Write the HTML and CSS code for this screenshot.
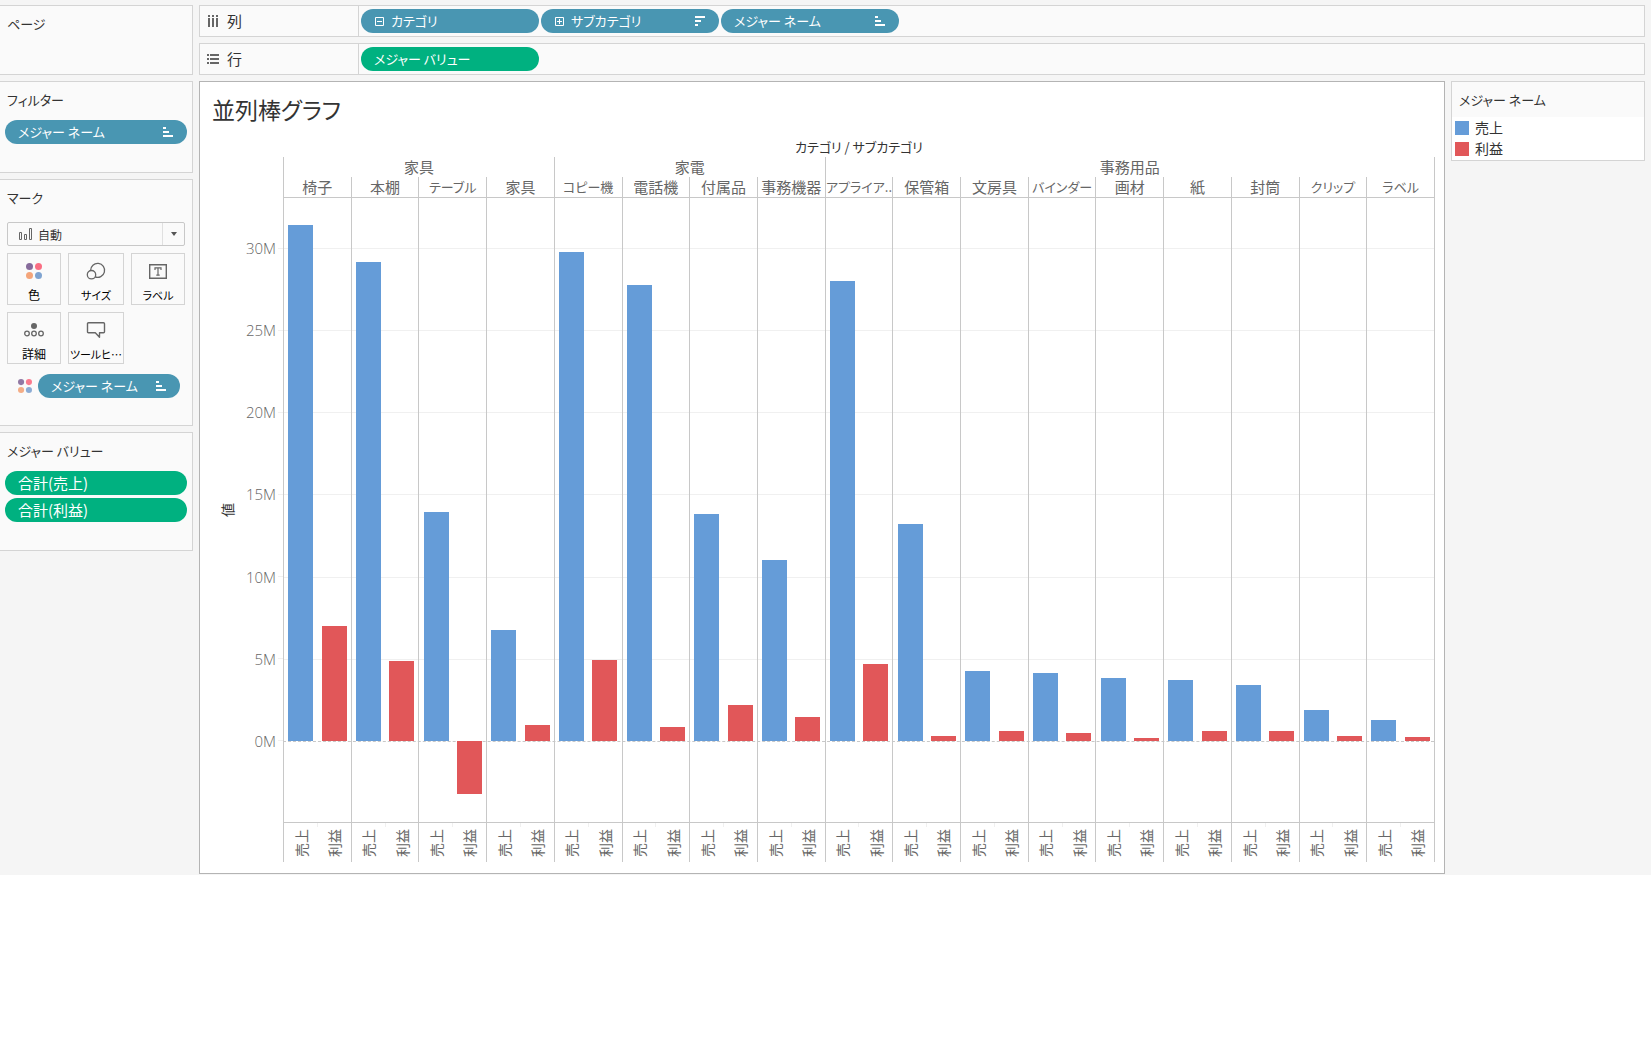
FILE: index.html
```html
<!DOCTYPE html>
<html lang="ja">
<head>
<meta charset="utf-8">
<meta name="viewport" content="width=device-width, initial-scale=1">
<title>並列棒グラフ</title>
<link rel="stylesheet" href="styles.css">
</head>
<body>
<svg class="defs" aria-hidden="true">
  <symbol id="sort-asc" viewBox="0 0 10 10"><path d="M0 0h3v2H0zM0 4h6v2H0zM0 8h10v2H0z"/></symbol>
  <symbol id="sort-desc" viewBox="0 0 10 10"><path d="M0 0h10v2H0zM0 4h6v2H0zM0 8h3v2H0z"/></symbol>
  <symbol id="dots" viewBox="0 0 16 16"><circle cx="3.5" cy="3.5" r="3.5" fill="#866b9b"/><circle cx="12.5" cy="3.5" r="3.5" fill="#fa6e83"/><circle cx="3.5" cy="12.5" r="3.5" fill="#f4a57a"/><circle cx="12.5" cy="12.5" r="3.5" fill="#7fa3d0"/></symbol>
</svg>
<div class="workspace">
  <aside class="cards">
    <section class="card card-pages">
      <h2 class="card-title">ページ</h2>
    </section>
    <section class="card">
      <h2 class="card-title">フィルター</h2>
      <div class="pills">
        <button class="pill blue" type="button">メジャー ネーム<svg class="sort"><use href="#sort-asc"/></svg></button>
      </div>
    </section>
    <section class="card card-marks">
      <h2 class="card-title">マーク</h2>
      <div class="marks">
        <div class="mark-type">
          <svg class="mark-icon" viewBox="0 0 14 12"><path d="M.5 4.500h2v7h-2zM5.500 6.500h2v5h-2zM10.500.5h2v11h-2z" fill="none" stroke="#666"/></svg>
          <select class="mark-select" aria-label="マークの種類"><option>自動</option></select>
          <span class="arrow"><svg width="6" height="4" viewBox="0 0 6 4"><path d="M0 0h6L3 4z" fill="#555"/></svg></span>
        </div>
        <div class="mark-buttons">
          <button class="mark-button" type="button"><svg class="tile-icon dots-icon"><use href="#dots"/></svg>色</button>
          <button class="mark-button kana" type="button"><svg class="tile-icon" viewBox="0 0 20 18"><g fill="none" stroke="#666" stroke-width="1.300"><path d="M4.600 8.500A7 7 0 1 1 9 14.900"/><circle cx="5.500" cy="12.700" r="4.200"/></g></svg>サイズ</button>
          <button class="mark-button kana" type="button"><svg class="tile-icon" viewBox="0 0 20 18"><path d="M1.700 2.700h16.600v13.600H1.700z" fill="none" stroke="#666" stroke-width="1.400"/><path d="M7 8V5.800h6V8M10 5.800v7.400M8.300 13.200h3.400" fill="none" stroke="#666" stroke-width="1.200"/></svg>ラベル</button>
          <button class="mark-button" type="button"><svg class="tile-icon" viewBox="0 0 20 18"><circle cx="10" cy="5" r="3" fill="#666"/><g fill="none" stroke="#666" stroke-width="1.300"><circle cx="3" cy="12.500" r="2.300"/><circle cx="10" cy="12.500" r="2.300"/><circle cx="17" cy="12.500" r="2.300"/></g></svg>詳細</button>
          <button class="mark-button kana" type="button"><svg class="tile-icon" viewBox="0 0 20 18"><path d="M2.500 1.700h15q1 0 1 1v8q0 1-1 1h-4v4.500l-4.200-4.500H2.500q-1 0-1-1v-8q0-1 1-1z" fill="none" stroke="#666" stroke-width="1.400" stroke-linejoin="round"/></svg>ツールヒ…</button>
        </div>
        <div class="encoding">
          <svg class="encoding-icon"><use href="#dots"/></svg>
          <button class="pill blue" type="button">メジャー ネーム<svg class="sort"><use href="#sort-asc"/></svg></button>
        </div>
      </div>
    </section>
    <section class="card">
      <h2 class="card-title">メジャー バリュー</h2>
      <div class="pills">
        <button class="pill green kanji" type="button">合計(売上)</button>
        <button class="pill green kanji" type="button">合計(利益)</button>
      </div>
    </section>
  </aside>

  <div class="main">
    <div class="shelf">
      <div class="shelf-name"><svg class="shelf-icon" viewBox="0 0 12 12"><path d="M1 0h2v2H1zM5 0h2v2H5zM9 0h2v2H9zM1 3h2v9H1zM5 3h2v9H5zM9 3h2v9H9z"/></svg>列</div>
      <div class="shelf-pills">
        <button class="pill blue" type="button"><svg class="toggle" viewBox="0 0 9 9"><path d="M.5.5h8v8h-8zM2 4.500h5"/></svg>カテゴリ</button>
        <button class="pill blue" type="button"><svg class="toggle" viewBox="0 0 9 9"><path d="M.5.5h8v8h-8zM2 4.500h5M4.500 2v5"/></svg>サブカテゴリ<svg class="sort"><use href="#sort-desc"/></svg></button>
        <button class="pill blue" type="button">メジャー ネーム<svg class="sort"><use href="#sort-asc"/></svg></button>
      </div>
    </div>
    <div class="shelf">
      <div class="shelf-name"><svg class="shelf-icon" viewBox="0 0 12 12"><path d="M0 1h2v2H0zM0 5h2v2H0zM0 9h2v2H0zM3 1h9v2H3zM3 5h9v2H3zM3 9h9v2H3z"/></svg>行</div>
      <div class="shelf-pills">
        <button class="pill green" type="button">メジャー バリュー</button>
      </div>
    </div>

    <div class="stage">
      <main class="view">
        <h1 class="view-title">並列棒グラフ</h1>
        <div class="chart">
          <div class="caption">カテゴリ / サブカテゴリ</div>
          <div class="axis">
            <div class="axis-title"><span class="sideways">値</span></div>
            <div class="axis-labels">
              <span>30M</span><span>25M</span><span>20M</span><span>15M</span><span>10M</span><span>5M</span><span>0M</span>
            </div>
          </div>
          <div class="panes">
            <div class="group four">家具</div>
            <div class="group four">家電</div>
            <div class="group nine">事務用品</div>
            <div class="name kanji">椅子</div><div class="name kanji">本棚</div><div class="name">テーブル</div><div class="name kanji">家具</div><div class="name">コピー機</div><div class="name kanji">電話機</div><div class="name kanji">付属品</div><div class="name kanji">事務機器</div><div class="name">アプライア..</div><div class="name kanji">保管箱</div><div class="name kanji">文房具</div><div class="name">バインダー</div><div class="name kanji">画材</div><div class="name kanji">紙</div><div class="name kanji">封筒</div><div class="name">クリップ</div><div class="name">ラベル</div>
            <div class="gridlines"><i></i><i></i><i></i><i></i><i></i><i></i><i></i><i class="zero"></i></div>
            <div class="plots">
              <div class="pane"><i class="bar sales" style="--v:31.4"></i><i class="bar profit" style="--v:7"></i></div>
              <div class="pane"><i class="bar sales" style="--v:29.15"></i><i class="bar profit" style="--v:4.87"></i></div>
              <div class="pane"><i class="bar sales" style="--v:13.94"></i><i class="bar profit loss" style="--v:3.23"></i></div>
              <div class="pane"><i class="bar sales" style="--v:6.75"></i><i class="bar profit" style="--v:0.97"></i></div>
              <div class="pane"><i class="bar sales" style="--v:29.76"></i><i class="bar profit" style="--v:4.93"></i></div>
              <div class="pane"><i class="bar sales" style="--v:27.75"></i><i class="bar profit" style="--v:0.85"></i></div>
              <div class="pane"><i class="bar sales" style="--v:13.81"></i><i class="bar profit" style="--v:2.19"></i></div>
              <div class="pane"><i class="bar sales" style="--v:11.01"></i><i class="bar profit" style="--v:1.46"></i></div>
              <div class="pane"><i class="bar sales" style="--v:27.99"></i><i class="bar profit" style="--v:4.69"></i></div>
              <div class="pane"><i class="bar sales" style="--v:13.2"></i><i class="bar profit" style="--v:0.3"></i></div>
              <div class="pane"><i class="bar sales" style="--v:4.26"></i><i class="bar profit" style="--v:0.61"></i></div>
              <div class="pane"><i class="bar sales" style="--v:4.14"></i><i class="bar profit" style="--v:0.49"></i></div>
              <div class="pane"><i class="bar sales" style="--v:3.83"></i><i class="bar profit" style="--v:0.18"></i></div>
              <div class="pane"><i class="bar sales" style="--v:3.71"></i><i class="bar profit" style="--v:0.61"></i></div>
              <div class="pane"><i class="bar sales" style="--v:3.41"></i><i class="bar profit" style="--v:0.61"></i></div>
              <div class="pane"><i class="bar sales" style="--v:1.89"></i><i class="bar profit" style="--v:0.3"></i></div>
              <div class="pane"><i class="bar sales" style="--v:1.28"></i><i class="bar profit" style="--v:0.24"></i></div>
            </div>
            <div class="foot"><span class="sideways">売上</span><span class="sideways">利益</span></div>
            <div class="foot"><span class="sideways">売上</span><span class="sideways">利益</span></div>
            <div class="foot"><span class="sideways">売上</span><span class="sideways">利益</span></div>
            <div class="foot"><span class="sideways">売上</span><span class="sideways">利益</span></div>
            <div class="foot"><span class="sideways">売上</span><span class="sideways">利益</span></div>
            <div class="foot"><span class="sideways">売上</span><span class="sideways">利益</span></div>
            <div class="foot"><span class="sideways">売上</span><span class="sideways">利益</span></div>
            <div class="foot"><span class="sideways">売上</span><span class="sideways">利益</span></div>
            <div class="foot"><span class="sideways">売上</span><span class="sideways">利益</span></div>
            <div class="foot"><span class="sideways">売上</span><span class="sideways">利益</span></div>
            <div class="foot"><span class="sideways">売上</span><span class="sideways">利益</span></div>
            <div class="foot"><span class="sideways">売上</span><span class="sideways">利益</span></div>
            <div class="foot"><span class="sideways">売上</span><span class="sideways">利益</span></div>
            <div class="foot"><span class="sideways">売上</span><span class="sideways">利益</span></div>
            <div class="foot"><span class="sideways">売上</span><span class="sideways">利益</span></div>
            <div class="foot"><span class="sideways">売上</span><span class="sideways">利益</span></div>
            <div class="foot"><span class="sideways">売上</span><span class="sideways">利益</span></div>
          </div>
        </div>
      </main>
      <aside class="legend">
        <h2 class="legend-title">メジャー ネーム</h2>
        <ul class="legend-items">
          <li><i class="swatch sales"></i>売上</li>
          <li><i class="swatch profit"></i>利益</li>
        </ul>
      </aside>
    </div>
  </div>
</div>
</body>
</html>
```
FILE: styles.css
```css
* {
  box-sizing: border-box;
}

body {
  margin: 0;
  background: #fff;
  color: #333;
  font: 13px/20px "Noto Sans CJK JP", sans-serif;
  font-feature-settings: "palt";
}

button,
select {
  font: inherit;
  font-feature-settings: inherit;
}

h1,
h2,
ul {
  margin: 0;
  padding: 0;
  font-weight: 400;
  list-style: none;
}

.defs {
  display: none;
}

.workspace {
  display: grid;
  grid-template-columns: 193px minmax(0, 1fr);
  gap: 6px;
  padding: 5px 6px 1px 0;
  background: #f5f5f5;
}

/* Cards down the left side */

.cards {
  display: flex;
  flex-direction: column;
  gap: 6px;
}

.card {
  padding: 6px 5px 28px;
  border: 1px solid #d4d4d4;
  border-left: 0;
  background: #fafafa;
}

.card-pages {
  min-height: 70px;
}

.card-marks {
  padding-bottom: 27px;
}

.card-title {
  padding-left: 2px;
  font-size: 13px;
  line-height: 24px;
}

.pills {
  display: flex;
  flex-direction: column;
  gap: 3px;
  padding-top: 8px;
}

.pill {
  display: flex;
  align-items: center;
  height: 24px;
  padding: 0 14px 0 13px;
  border: 0;
  border-radius: 12px;
  color: #fff;
  font-size: 13px;
  line-height: 24px;
  white-space: nowrap;
}

.pill.kanji {
  font-size: 15px;
}

.blue {
  background: #4996b2;
}

.green {
  background: #00b180;
}

.sort {
  width: 10px;
  height: 10px;
  margin-left: auto;
  fill: #fff;
}

.toggle {
  width: 9px;
  height: 9px;
  margin: 0 7px 0 1px;
  fill: none;
  stroke: #fff;
}

/* Marks card */

.marks {
  display: flex;
  flex-direction: column;
  gap: 7px;
  padding: 12px 2px 0;
}

.mark-type {
  display: flex;
  height: 24px;
  border: 1px solid #c8c8c8;
  border-radius: 2px;
  align-items: center;
}

.mark-icon {
  width: 14px;
  height: 12px;
  margin-left: 11px;
}

.mark-select {
  flex: 1;
  min-width: 0;
  height: 22px;
  padding: 1px 0 0 5px;
  border: 0;
  appearance: none;
  background: transparent;
  color: #333;
  font-size: 12px;
  line-height: 20px;
}

.arrow {
  display: flex;
  align-items: center;
  justify-content: center;
  width: 22px;
  height: 22px;
  border-left: 1px solid #e0e0e0;
}

.mark-buttons {
  display: grid;
  grid-template-columns: minmax(0, 54fr) minmax(0, 56fr) minmax(0, 54fr);
  gap: 7px;
}

.mark-button {
  display: flex;
  flex-direction: column;
  align-items: center;
  gap: 5px;
  height: 52px;
  padding: 8px 0 0;
  border: 1px solid #d4d4d4;
  background: #fafafa;
  color: #000;
  font-size: 12px;
  line-height: 20px;
  white-space: nowrap;
}

.mark-button.kana {
  font-size: 11px;
}

.tile-icon {
  flex: none;
  width: 20px;
  height: 18px;
}

.dots-icon {
  padding: 1px 0;
}

.encoding {
  display: flex;
  align-items: center;
  gap: 6px;
  padding: 3px 5px 0 11px;
}

.encoding .pill {
  flex: 1;
}

.encoding-icon {
  width: 14px;
  height: 14px;
  opacity: 0.9;
}

/* Column and row shelves */

.main {
  display: flex;
  flex-direction: column;
  gap: 6px;
}

.shelf {
  display: flex;
  height: 32px;
  border: 1px solid #d4d4d4;
  background: #fafafa;
}

.shelf-name {
  display: flex;
  align-items: center;
  gap: 8px;
  width: 159px;
  padding-left: 7px;
  border-right: 1px solid #d4d4d4;
  font-size: 15px;
}

.shelf-icon {
  width: 12px;
  height: 12px;
  fill: #666;
}

.shelf-pills {
  display: flex;
  align-items: center;
  gap: 2px;
  padding-left: 2px;
}

.shelf-pills .pill {
  width: 178px;
}

/* Worksheet and legend */

.stage {
  display: grid;
  grid-template-columns: minmax(0, 1fr) 194px;
  gap: 6px;
  align-items: start;
}

.view {
  padding: 10px 9px 11px 0;
  border: 1px solid #b4b4b4;
  background: #fff;
}

.view-title {
  padding-left: 12px;
  font-size: 23px;
  line-height: 34px;
}

.chart {
  display: grid;
  grid-template-columns: 83px minmax(0, 1fr);
  padding-top: 11px;
}

.caption {
  grid-column: 2;
  height: 20px;
  text-align: center;
}

.axis {
  display: grid;
  grid-template-columns: 1fr 46px;
  grid-template-rows: 624px;
  padding-top: 41px;
}

.axis-title {
  display: grid;
  place-items: center end;
  color: #333;
  font-size: 14px;
}

.sideways {
  writing-mode: vertical-rl;
  text-orientation: sideways;
  transform: rotate(180deg);
}

.axis-labels {
  display: grid;
  grid-template-rows: 9fr repeat(7, 82fr) 40fr;
  color: #666;
  font: 300 15px/20px "Open Sans", sans-serif;
}

.axis-labels::before {
  content: "";
}

.axis-labels span {
  display: flex;
  align-items: center;
  justify-content: flex-end;
  gap: 2px;
}

.axis-labels span::after {
  width: 5px;
  height: 1px;
  background: #f0f0f0;
  content: "";
}

.panes {
  display: grid;
  grid-template-columns: repeat(17, minmax(0, 1fr));
  grid-template-rows: 20px 21px 624px 40px;
  border-right: 1px solid #c8c8c8;
  color: #666;
}

.group,
.name,
.pane,
.foot {
  border-left: 1px solid #c8c8c8;
  text-align: center;
  white-space: nowrap;
}

.group,
.name.kanji {
  font-size: 15px;
}

.group {
  grid-row: 1;
}

.four {
  grid-column: span 4;
}

.nine {
  grid-column: span 9;
}

.name {
  grid-row: 2;
  border-bottom: 1px solid #c8c8c8;
}

.gridlines {
  display: grid;
  grid-area: 3 / 1 / 4 / -1;
  grid-template-rows: 50fr repeat(6, 82fr) 81fr;
}

.gridlines i + i {
  border-top: 1px solid #f0f0f0;
}

.gridlines i.zero {
  border-top: 1px dashed #c8c8c8;
}

.plots {
  display: grid;
  grid-area: 3 / 1 / 4 / -1;
  grid-template-columns: repeat(17, minmax(0, 1fr));
}

.pane {
  display: grid;
  grid-template-columns: 1fr 1fr;
  grid-template-rows: 543fr 81fr;
  justify-items: center;
}

.bar {
  grid-row: 1;
  align-self: end;
  width: 25px;
  height: calc(var(--v) / 33.04 * 100%);
}

.bar.loss {
  grid-area: 2 / 2;
  align-self: start;
  height: calc(var(--v) / 4.93 * 100%);
}

.sales {
  background: #659cd8;
}

.profit {
  background: #e15759;
}

.foot {
  display: grid;
  grid-row: 4;
  grid-template-columns: 1fr 1fr;
  place-items: center;
  border-top: 1px solid #c8c8c8;
  background: linear-gradient(#f0f0f0, #f0f0f0) center top / 1px 4px no-repeat;
  font-size: 14px;
}

.legend {
  border: 1px solid #d4d4d4;
  background: #fff;
}

.legend-title {
  padding: 6px 7px 5px;
  background: #fafafa;
  font-size: 13px;
  line-height: 24px;
}

.legend-items {
  padding: 0 3px 1px;
  font-size: 14px;
  line-height: 21px;
}

.legend-items li {
  display: flex;
  align-items: center;
  gap: 6px;
}

.swatch {
  width: 14px;
  height: 14px;
}
```
